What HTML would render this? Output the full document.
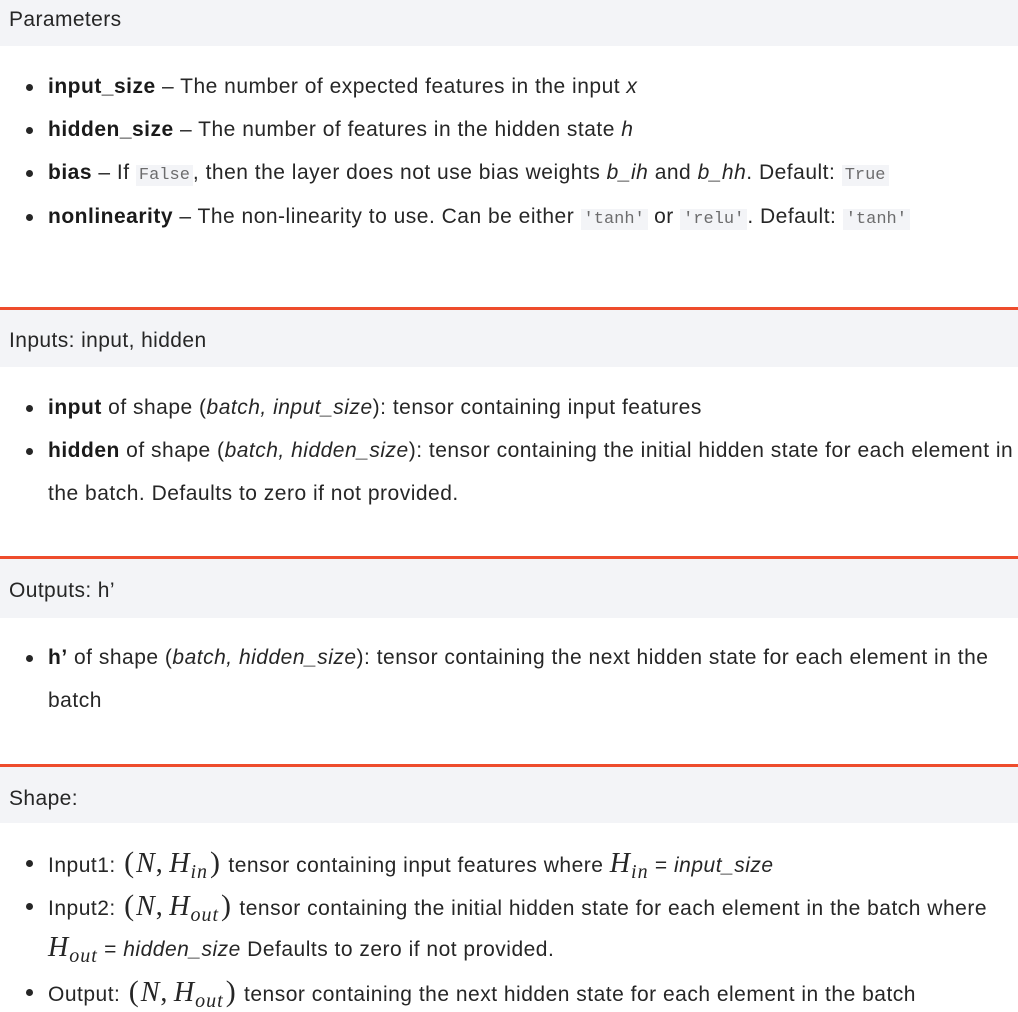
<!DOCTYPE html>
<html><head><meta charset="utf-8"><style>
body{margin:0;width:1018px;height:1012px;background:#fff;position:relative;overflow:hidden;font-family:"Liberation Sans",sans-serif;color:#262626;font-size:21px;letter-spacing:0.5px}
.bar{position:absolute;left:0;width:1018px;background:#f3f4f7;}
.bar span{position:absolute;left:9px;font-size:21px;color:#262626;letter-spacing:0.4px}
.line{position:absolute;left:0;width:1018px;height:3px;background:#ee4c2c}
.r{position:absolute;left:48px;white-space:nowrap;line-height:24px;height:24px}
.r.b::before{content:"";position:absolute;left:-22px;top:9px;width:7px;height:7px;border-radius:50%;background:#262626}
b{font-weight:bold;color:#1a1a1a}
code{font-family:"Liberation Mono",monospace;font-size:17px;background:#f3f4f7;color:#6c6c6d;padding:1px 3px;letter-spacing:0}
.m{font-family:"Liberation Serif",serif;font-style:italic;font-size:28px;letter-spacing:1px}
.p{font-family:"Liberation Serif",serif;font-size:30px;letter-spacing:0;margin:0 2px}
.c{font-family:"Liberation Serif",serif;font-size:28px;margin-right:6px}
sub{font-family:"Liberation Serif",serif;font-style:italic;font-size:20px;vertical-align:-6px;line-height:0;letter-spacing:1px}
</style></head><body>
<div class="bar" style="top:0;height:46px"><span style="top:8px">Parameters</span></div>
<div class="r b" style="top:75px"><b>input_size</b> – The number of expected features in the input <i>x</i></div>
<div class="r b" style="top:118px"><b>hidden_size</b> – The number of features in the hidden state <i>h</i></div>
<div class="r b" style="top:161px"><b>bias</b> – If <code>False</code>, then the layer does not use bias weights <i>b_ih</i> and <i>b_hh</i>. Default: <code>True</code></div>
<div class="r b" style="top:205px"><b>nonlinearity</b> – The non-linearity to use. Can be either <code>'tanh'</code> or <code>'relu'</code>. Default: <code>'tanh'</code></div>

<div class="line" style="top:307px"></div>
<div class="bar" style="top:310px;height:57px"><span style="top:19px">Inputs: input, hidden</span></div>
<div class="r b" style="top:396px"><b>input</b> of shape (<i>batch, input_size</i>): tensor containing input features</div>
<div class="r b" style="top:439px"><b>hidden</b> of shape (<i>batch, hidden_size</i>): tensor containing the initial hidden state for each element in</div>
<div class="r" style="top:482px">the batch. Defaults to zero if not provided.</div>

<div class="line" style="top:556px"></div>
<div class="bar" style="top:559px;height:59px"><span style="top:20px">Outputs: h’</span></div>
<div class="r b" style="top:646px"><b>h’</b> of shape (<i>batch, hidden_size</i>): tensor containing the next hidden state for each element in the</div>
<div class="r" style="top:689px">batch</div>

<div class="line" style="top:764px"></div>
<div class="bar" style="top:767px;height:56px"><span style="top:20px">Shape:</span></div>
<div class="r b" style="top:851px">Input1: <span class="p">(</span><span class="m">N</span><span class="c">,</span><span class="m">H</span><sub>in</sub><span class="p">)</span> tensor containing input features where <span class="m">H</span><sub>in</sub> = <i>input_size</i></div>
<div class="r b" style="top:894px">Input2: <span class="p">(</span><span class="m">N</span><span class="c">,</span><span class="m">H</span><sub>out</sub><span class="p">)</span> tensor containing the initial hidden state for each element in the batch where</div>
<div class="r" style="top:936px"><span class="m">H</span><sub>out</sub> = <i>hidden_size</i> Defaults to zero if not provided.</div>
<div class="r b" style="top:980px">Output: <span class="p">(</span><span class="m">N</span><span class="c">,</span><span class="m">H</span><sub>out</sub><span class="p">)</span> tensor containing the next hidden state for each element in the batch</div>
</body></html>
